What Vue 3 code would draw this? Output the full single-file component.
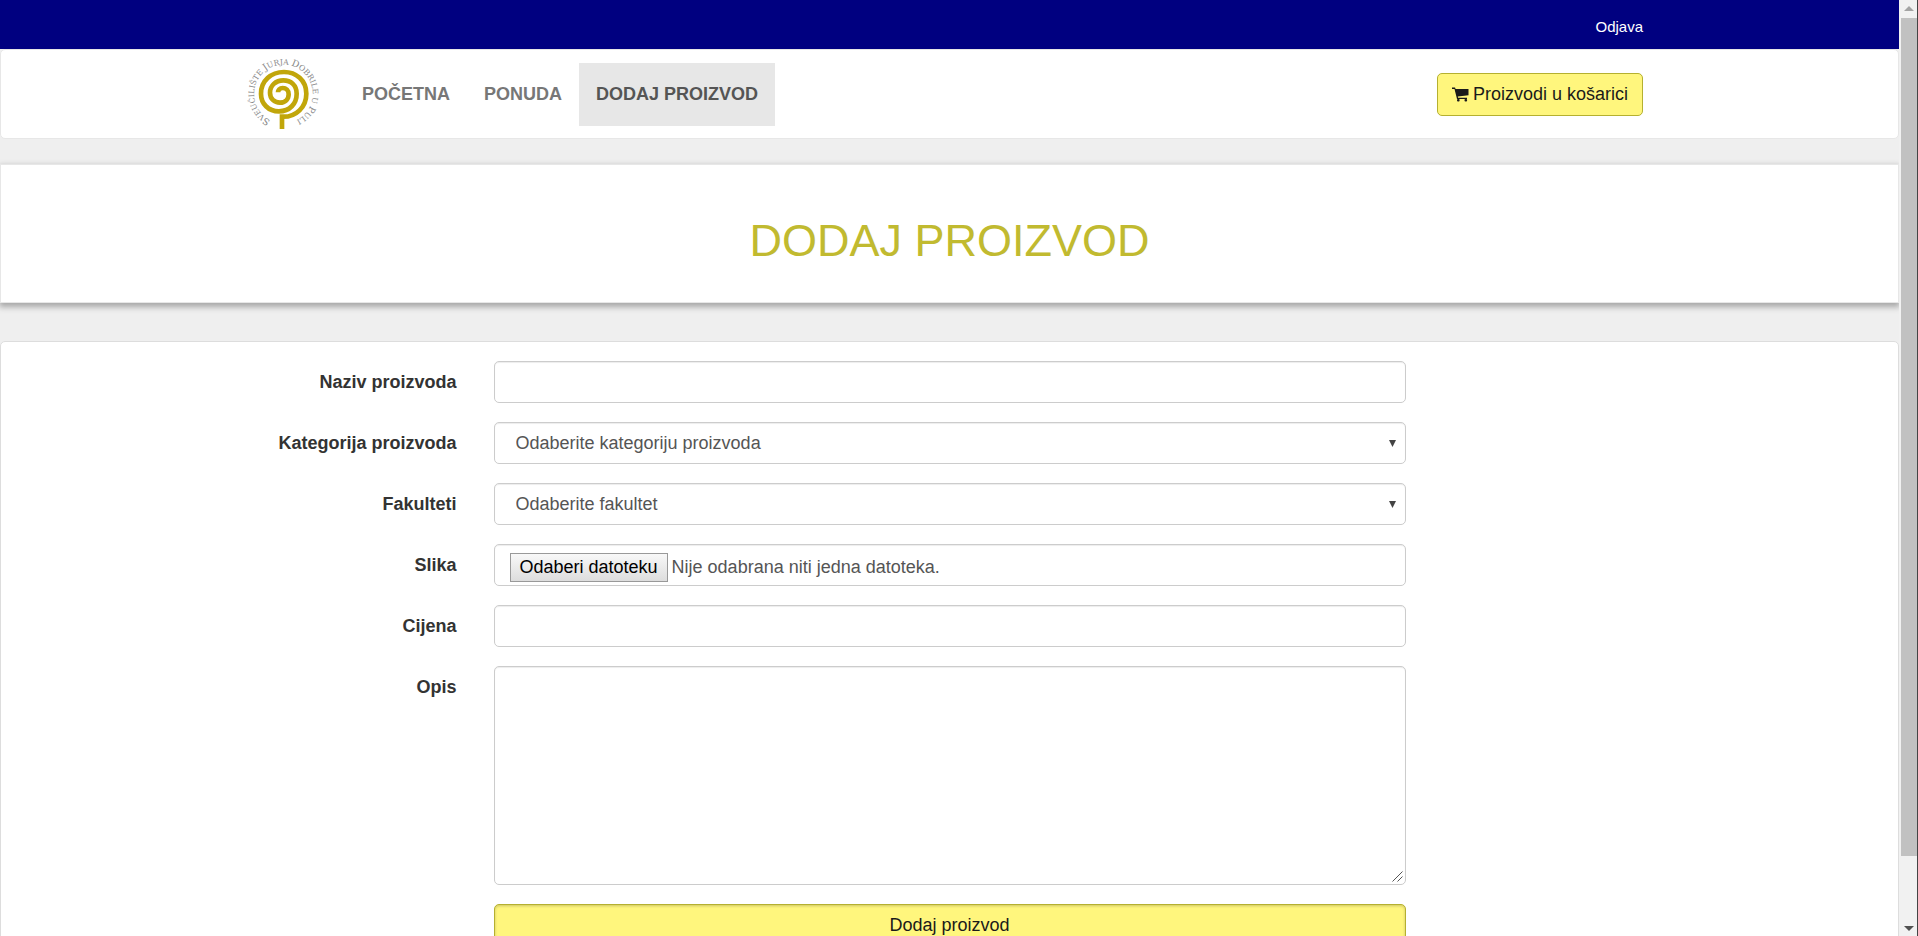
<script setup>
import { ref } from 'vue'

const links = [
  { label: 'POČETNA', active: false },
  { label: 'PONUDA', active: false },
  { label: 'DODAJ PROIZVOD', active: true },
]

const name = ref('')
const category = ref('')
const faculty = ref('')
const price = ref('')
const description = ref('')
const fileName = ref('')

function onFile(event) {
  const file = event.target.files[0]
  fileName.value = file ? file.name : ''
}
</script>

<template>
  <div class="shell">
    <div class="page">
      <header class="topbar">
        <div class="container topbar-inner">
          <a href="#" class="logout">Odjava</a>
        </div>
      </header>

      <nav class="navbar">
        <div class="container navbar-inner">
          <a href="#" class="brand" aria-label="Sveučilište Jurja Dobrile u Puli">
            <svg viewBox="43 41 240 240" class="logo">
              <defs>
                <path id="ring" d="M123 240 A88 88 0 1 1 173 248" />
              </defs>
              <path
                class="spiral"
                d="M157 266 V229 C200 231 230 199 230 160 C230 120 199 95 163 95 C124 95 94 122 94 160 C94 190 116 213 148 213 C180 213 201 190 201 160 C201 135 184 120 161 120 C138 120 121 136 121 157 C121 175 134 187 151 187 C167 187 177 176 177 162 C177 150 169 143 159 143 C150 143 145 149 145 156"
              />
              <text class="ring-text">
                <textPath href="#ring"><tspan class="cap">S</tspan>VEUČILIŠTE <tspan class="cap">J</tspan>URJA <tspan class="cap">D</tspan>OBRILE U <tspan class="cap">P</tspan>ULI</textPath>
              </text>
            </svg>
          </a>
          <ul class="menu">
            <li v-for="link in links" :key="link.label">
              <a href="#" class="menu-link" :class="{ active: link.active }">{{ link.label }}</a>
            </li>
          </ul>
          <button type="button" class="btn cart">
            <svg viewBox="0 0 17 15" class="cart-icon" aria-hidden="true">
              <path d="M0 .5h3l.6 1.5H16.500v6.300L5.800 9.600l.3 1.200H15v1.200H5L2.500 1.900H0z" />
              <rect x="5" y="12" width="2.600" height="2.600" rx="1" />
              <rect x="12.500" y="12" width="2.600" height="2.600" rx="1" />
            </svg>
            Proizvodi u košarici
          </button>
        </div>
      </nav>

      <section class="title-panel">
        <h1>DODAJ PROIZVOD</h1>
      </section>

      <main class="form-panel">
        <form class="container form" @submit.prevent>
          <label for="name">Naziv proizvoda</label>
          <input id="name" v-model="name" type="text" class="control" />

          <label for="category">Kategorija proizvoda</label>
          <div class="select">
            <select id="category" v-model="category" class="control">
              <option value="">Odaberite kategoriju proizvoda</option>
            </select>
            <svg viewBox="0 0 7 7" class="arrow" aria-hidden="true"><path d="M0 0h7L3.500 7z" /></svg>
          </div>

          <label for="faculty">Fakulteti</label>
          <div class="select">
            <select id="faculty" v-model="faculty" class="control">
              <option value="">Odaberite fakultet</option>
            </select>
            <svg viewBox="0 0 7 7" class="arrow" aria-hidden="true"><path d="M0 0h7L3.500 7z" /></svg>
          </div>

          <label for="image">Slika</label>
          <label class="control file">
            <input id="image" type="file" class="file-input" @change="onFile" />
            <span class="file-button">Odaberi datoteku</span>
            <span>{{ fileName || 'Nije odabrana niti jedna datoteka.' }}</span>
          </label>

          <label for="price">Cijena</label>
          <input id="price" v-model="price" type="text" class="control" />

          <label for="description">Opis</label>
          <div class="area-wrap">
            <textarea id="description" v-model="description" class="control area"></textarea>
            <svg viewBox="0 0 11 11" class="grip" aria-hidden="true"><path d="M.5 10.500l10-10M5.500 10.500l5-5" /></svg>
          </div>

          <button type="submit" class="btn submit">Dodaj proizvod</button>
        </form>
      </main>
    </div>

    <div class="scrollbar" aria-hidden="true">
      <svg viewBox="0 0 10 5" class="scroll-arrow up"><path d="M0 5h10L5 0z" /></svg>
      <div class="track"><div class="thumb"></div></div>
      <svg viewBox="0 0 10 5" class="scroll-arrow down"><path d="M0 0h10L5 5z" /></svg>
    </div>
  </div>
</template>

<style>
body {
  margin: 0;
  background: #efefef;
}
</style>

<style scoped>
* {
  box-sizing: border-box;
}
.shell {
  display: grid;
  grid-template-columns: minmax(0, 1fr) 19px;
  height: 100vh;
  font-family: "Liberation Sans", Arial, sans-serif;
  font-size: 18px;
  line-height: 25px;
  color: #333;
}
.page {
  overflow-y: auto;
  scrollbar-width: none;
  background: #efefef;
}
.container {
  max-width: 1425px;
  margin: 0 auto;
}
.topbar {
  background: #000080;
}
.topbar-inner {
  display: flex;
  justify-content: flex-end;
  padding: 14px 19px 10px;
}
.logout {
  color: #fff;
  font-size: 15px;
  text-decoration: none;
}
.navbar {
  background: #fff;
  border: 1px solid #e7e7e7;
  border-radius: 5px;
  margin-bottom: 25px;
}
.navbar-inner {
  display: flex;
  align-items: center;
  padding: 4px 19px 4px 7px;
}
.brand {
  display: flex;
  margin-right: 21px;
}
.logo {
  width: 80px;
  height: 80px;
  overflow: visible;
}
.spiral {
  fill: none;
  stroke: #c1a60a;
  stroke-width: 14;
}
.ring-text {
  font-family: "DejaVu Serif", serif;
  font-size: 23px;
  fill: #888;
}
.cap {
  font-size: 28px;
}
.menu {
  display: flex;
  margin: 0;
  padding: 0;
  list-style: none;
}
.menu-link {
  display: block;
  padding: 19px 17px;
  color: #777;
  font-weight: bold;
  text-decoration: none;
}
.menu-link.active {
  background: #e7e7e7;
  color: #555;
}
.btn {
  border: 1px solid #b5b030;
  border-radius: 5px;
  background: #fff67d;
  color: #1a1a1a;
  font: inherit;
  cursor: pointer;
}
.cart {
  display: flex;
  align-items: center;
  gap: 4px;
  margin-left: auto;
  padding: 8px 14px;
}
.cart-icon {
  width: 17px;
  height: 15px;
  fill: #1a1a1a;
}
.title-panel {
  padding: 51px 19px 36px;
  border: 1px solid #e7e7e7;
  background: #fff;
  box-shadow: 0 3px 6px 1px rgba(0, 0, 0, 0.3);
  text-align: center;
}
h1 {
  margin: 0;
  color: #c1ba30;
  font-size: 45px;
  font-weight: normal;
  line-height: 50px;
}
.form-panel {
  margin-top: 38px;
  padding: 19px 0;
  border: 1px solid #ddd;
  border-radius: 5px;
  background: #fff;
}
.form {
  display: grid;
  grid-template-columns: minmax(0, 2fr) minmax(0, 8fr) minmax(0, 2fr);
  row-gap: 19px;
}
.form > * {
  grid-column: 2;
  margin: 0 19px;
}
.form > label:not(.file) {
  grid-column: 1;
  margin: 0 18px 0 0;
  padding-top: 9px;
  font-weight: bold;
  text-align: right;
}
.control {
  min-width: 0;
  height: 42px;
  padding: 8px 17px;
  border: 1px solid #ccc;
  border-radius: 5px;
  background: #fff;
  box-shadow: inset 0 1px 1px rgba(0, 0, 0, 0.075);
  color: #555;
  font: inherit;
}
.select,
.area-wrap {
  display: grid;
}
.select > *,
.area-wrap > * {
  grid-area: 1 / 1;
}
select.control {
  appearance: none;
  padding: 8px 21px;
}
.arrow {
  align-self: center;
  justify-self: end;
  width: 7px;
  height: 7px;
  margin-right: 10px;
  fill: #444;
  pointer-events: none;
}
.file {
  display: flex;
  align-items: center;
  gap: 4px;
  padding: 4px 15px 0;
}
.file-input {
  width: 0;
  height: 0;
  margin-right: -4px;
  opacity: 0;
}
.file-button {
  padding: 1px 9px;
  border: 1px solid #999;
  background: linear-gradient(#f8f8f8, #ddd);
  color: #000;
}
.area {
  height: 219px;
  resize: none;
}
.grip {
  align-self: end;
  justify-self: end;
  width: 11px;
  height: 11px;
  margin: 3px;
  fill: none;
  stroke: #555;
  pointer-events: none;
}
.submit {
  padding: 8px 15px;
  box-shadow: inset 0 1px 3px rgba(0, 0, 0, 0.2);
}
.scrollbar {
  display: flex;
  flex-direction: column;
  align-items: center;
  border-right: 1px solid #444;
  background: #f1f1f1;
}
.scroll-arrow {
  width: 10px;
  height: 5px;
  margin: 6px 0 7px 2px;
}
.up {
  fill: #a3a3a3;
}
.down {
  margin: 7px 0 5px 2px;
  fill: #505050;
}
.track {
  flex: 1;
  align-self: stretch;
  padding-left: 2px;
}
.thumb {
  height: 93%;
  background: #c1c1c1;
}
</style>
